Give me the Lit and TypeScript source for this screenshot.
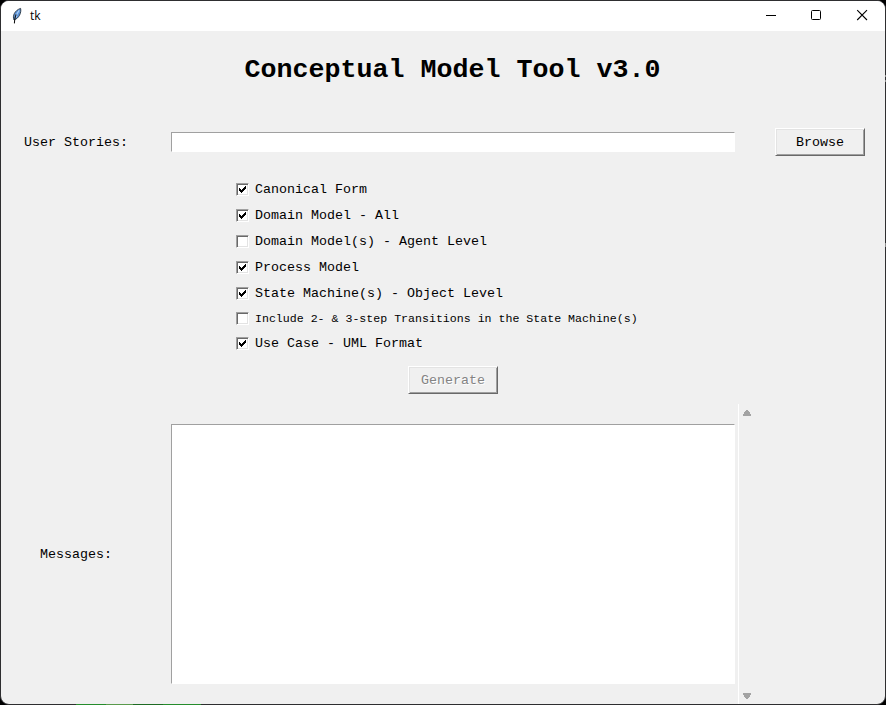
import { LitElement, html, css, svg } from "lit";
import { customElement, property } from "lit/decorators.js";

const MONO = css`"Courier New", "Liberation Mono", monospace`;

@customElement("tk-check")
class TkCheck extends LitElement {
  @property({ type: Boolean }) checked = false;
  @property({ type: Boolean, reflect: true }) small = false;
  @property() label = "";

  static styles = css`
    :host { display: flex; align-items: center; height: 26px; font: 13.333px/16px ${MONO}; color: #000; white-space: pre; }
    :host([small]) { height: 24px; font-size: 11.6px; }
    .box {
      box-sizing: border-box; width: 13px; height: 13px; margin-right: 6px; background: #fff;
      border: 1px solid; border-color: #a0a0a0 #fff #fff #a0a0a0;
      box-shadow: inset 1px 1px #696969, inset -1px -1px #e3e3e3;
    }
    .caption { padding-top: 2px; }
    svg { display: block; width: 11px; height: 11px; }
  `;

  render() {
    const tops = [2, 3, 4, 3, 2, 1, 0];
    return html`<span class="box"><svg viewBox="0 0 11 11" shape-rendering="crispEdges">
        ${this.checked ? tops.map((t, i) => svg`<rect x=${i + 2} y=${t + 2} width="1" height="3" />`) : ""}
      </svg></span><span class="caption">${this.label}</span>`;
  }
}

@customElement("app-root")
class AppRoot extends LitElement {
  static styles = css`
    :host { display: block; height: 705px; background: #000; font: 13.333px/16px ${MONO}; color: #000; }
    * { box-sizing: border-box; }
    .desk { position: relative; width: 886px; height: 705px; overflow: hidden; }
    .window {
      height: 705px; border: 1px solid #2e2e30; border-radius: 9px; background: #f0f0f0;
      overflow: hidden; display: flex; flex-direction: column;
    }
    .bar { height: 30px; flex: none; background: #fff; display: flex; align-items: center; }
    .feather { width: 14px; height: 18px; margin: 0 6px 0 9px; }
    .name { flex: 1; font: 12px/16px "Open Sans", "Noto Sans", sans-serif; }
    .ctl { width: 46px; height: 30px; display: block; fill: none; stroke: #000; overflow: visible; }
    h1 { margin: 0; height: 97px; padding-top: 23px; font: bold 26.667px/32px ${MONO}; width: 903px; text-align: center; flex: none; }
    .row { display: grid; grid-template-columns: 150px 564px 90px; column-gap: 20px; align-items: center; height: 28px; flex: none; }
    .row .button { margin-left: 20px; }
    .label { text-align: center; white-space: pre; padding-top: 2px; }
    .entry { height: 20px; background: #fff; border: 1px solid; border-color: #a0a0a0 #fff #fff #a0a0a0; }
    .button {
      width: 90px; height: 28px; text-align: center; line-height: 24px;
      border: 1px solid; border-color: #fff #696969 #696969 #fff;
      box-shadow: inset 1px 1px #e3e3e3, inset -1px -1px #a0a0a0;
      padding-top: 2px;
    }
    .checks { margin: 20px 0 10px 235px; flex: none; }
    .generate { margin-left: 407px; color: #838383; text-shadow: 1px 1px #fff; flex: none; }
    .output { display: grid; grid-template-columns: 150px 564px 20px; column-gap: 20px; height: 300px; margin-top: 10px; align-items: center; flex: none; }
    .text { height: 260px; background: #fff; border: 1px solid; border-color: #a0a0a0 #fff #fff #a0a0a0; }
    .scroll {
      height: 300px; width: 17px; margin-left: -17px; border-left: 1px solid #fff;
      display: flex; flex-direction: column; justify-content: space-between; align-items: center; padding: 6px 0 5px;
    }
    .scroll svg { width: 8px; height: 6px; fill: #a3a3a3; display: block; }
    .glow { position: absolute; left: 76px; top: 704px; width: 125px; height: 1px; background: linear-gradient(90deg, #258c2c 0 24%, #5a9a4c 24% 46%, #1e6b24 46% 70%, #258c2c 70%); }
    .speck { position: absolute; right: 0; width: 1px; background: #8d8d8d; }
    .s1 { top: 75px; height: 2px; }
    .s2 { top: 80px; height: 2px; }
    .s3 { top: 243px; height: 4px; }
  `;

  options: [string, boolean, boolean?][] = [
    ["Canonical Form", true],
    ["Domain Model - All", true],
    ["Domain Model(s) - Agent Level", false],
    ["Process Model", true],
    ["State Machine(s) - Object Level", true],
    ["Include 2- & 3-step Transitions in the State Machine(s)", false, true],
    ["Use Case - UML Format", true],
  ];

  render() {
    return html`
      <div class="desk">
        <div class="window">
          <div class="bar">
            <svg class="feather" viewBox="0 0 14 18">
              <path d="M4 13C2.2 9 4.6 3.4 10.6 1.4C11.6 5.6 9 11.4 4 13Z" fill="#5c93d8" stroke="#26323e" stroke-width="0.9" />
              <path d="M9.2 3.4C7.4 5.4 6.4 8 5.8 10.6" fill="none" stroke="#a9cdf5" stroke-width="1.2" />
              <path d="M6.2 7.6C4.8 10.2 4.6 12.4 4.4 16.4" fill="none" stroke="#111" stroke-width="1.1" />
            </svg>
            <span class="name">tk</span>
            <svg class="ctl" viewBox="0 0 46 30"><path d="M19 14.5H29" /></svg>
            <svg class="ctl" viewBox="0 0 46 30"><rect x="18.5" y="9.5" width="9" height="9" rx="1" /></svg>
            <svg class="ctl" viewBox="0 0 46 30"><path d="M18.2 9.2L28 19M28 9.2L18.2 19" stroke-width="1.1" /></svg>
          </div>
          <h1>Conceptual Model Tool v3.0</h1>
          <div class="row">
            <span class="label">User Stories:</span>
            <div class="entry"></div>
            <div class="button">Browse</div>
          </div>
          <div class="checks">
            ${this.options.map(([label, on, small]) => html`<tk-check .label=${label} ?checked=${on} ?small=${!!small}></tk-check>`)}
          </div>
          <div class="button generate">Generate</div>
          <div class="output">
            <span class="label">Messages:</span>
            <div class="text"></div>
            <div class="scroll">
              <svg viewBox="0 0 8 6" shape-rendering="crispEdges"><path d="M3 0H5V1H6V2H7V4H8V6H0V4H1V2H2V1H3Z" /></svg>
              <svg viewBox="0 0 8 6" shape-rendering="crispEdges"><path d="M0 0H8V2H7V4H6V5H5V6H3V5H2V4H1V2H0Z" /></svg>
            </div>
          </div>
        </div>
        <div class="glow"></div>
        <div class="speck s1"></div>
        <div class="speck s2"></div>
        <div class="speck s3"></div>
      </div>
    `;
  }
}
